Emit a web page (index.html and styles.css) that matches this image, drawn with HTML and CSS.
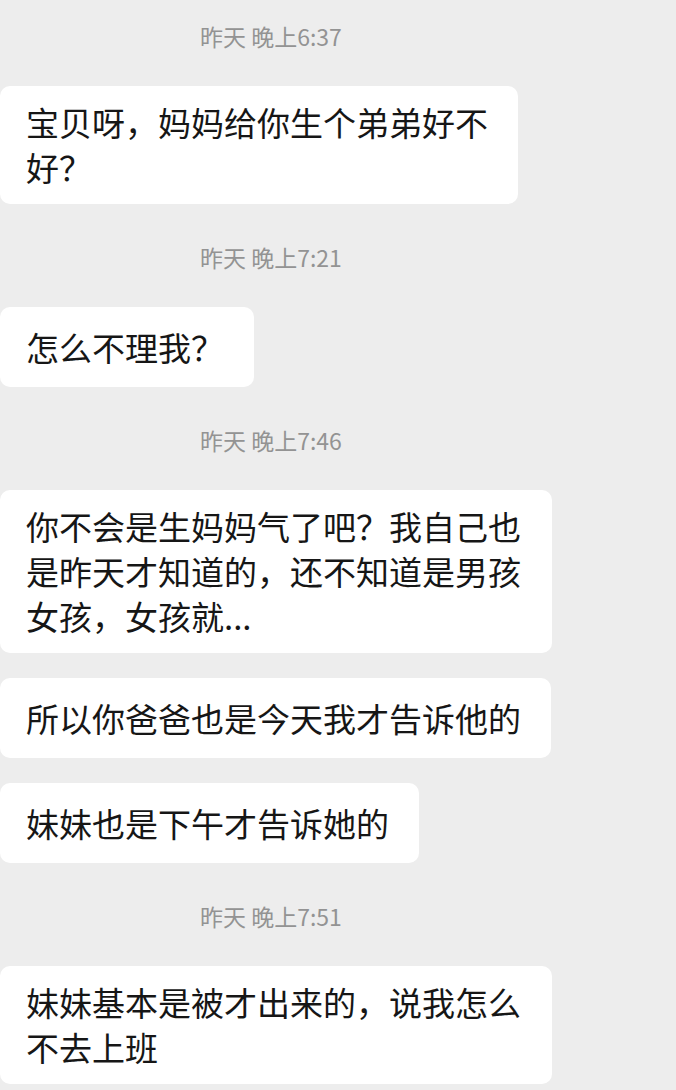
FILE: index.html
```html
<!DOCTYPE html>
<html lang="zh-CN">
<head>
    <meta charset="UTF-8">
    <meta name="viewport" content="width=device-width, initial-scale=1.0">
    <title>聊天记录</title>
    <link rel="stylesheet" href="styles.css">
</head>
<body>
    <main class="chat">
        <!-- 6:37 -->
        <div class="time">昨天 晚上6:37</div>
        <div class="msg">宝贝呀，妈妈给你生个弟弟好不<br>好？</div>

        <!-- 7:21 -->
        <div class="time">昨天 晚上7:21</div>
        <div class="msg">怎么不理我？</div>

        <!-- 7:46 -->
        <div class="time">昨天 晚上7:46</div>
        <div class="msg">你不会是生妈妈气了吧？我自己也是昨天才知道的，还不知道是男孩女孩，女孩就...</div>
        <div class="msg">所以你爸爸也是今天我才告诉他的</div>
        <div class="msg">妹妹也是下午才告诉她的</div>

        <!-- 7:51 -->
        <div class="time">昨天 晚上7:51</div>
        <div class="msg">妹妹基本是被才出来的，说我怎么不去上班</div>
    </main>
</body>
</html>
```

FILE: styles.css
```css
/* 聊天页面 */
* {
    margin: 0;
    padding: 0;
    box-sizing: border-box;
}

body {
    background-color: #ededed;
    color: #161616;
    font-family: "Noto Sans CJK SC", "Noto Sans", sans-serif;
}

.chat {
    display: flex;
    flex-direction: column;
    align-items: flex-start;
    gap: 25px;
    padding-top: 8px;
    height: 1090px;
    overflow: hidden;
}

.time {
    height: 30px;
    line-height: 30px;
    margin: 13px 0 10px;
    padding-left: 200px;
    font-size: 23px;
    color: #939393;
}

.msg {
    display: flex;
    align-items: center;
    max-width: 552px;
    min-height: 80px;
    padding: 14px 30px 14px 26px;
    background-color: #fff;
    border-radius: 10px;
    font-size: 33px;
    line-height: 45px;
}
```
